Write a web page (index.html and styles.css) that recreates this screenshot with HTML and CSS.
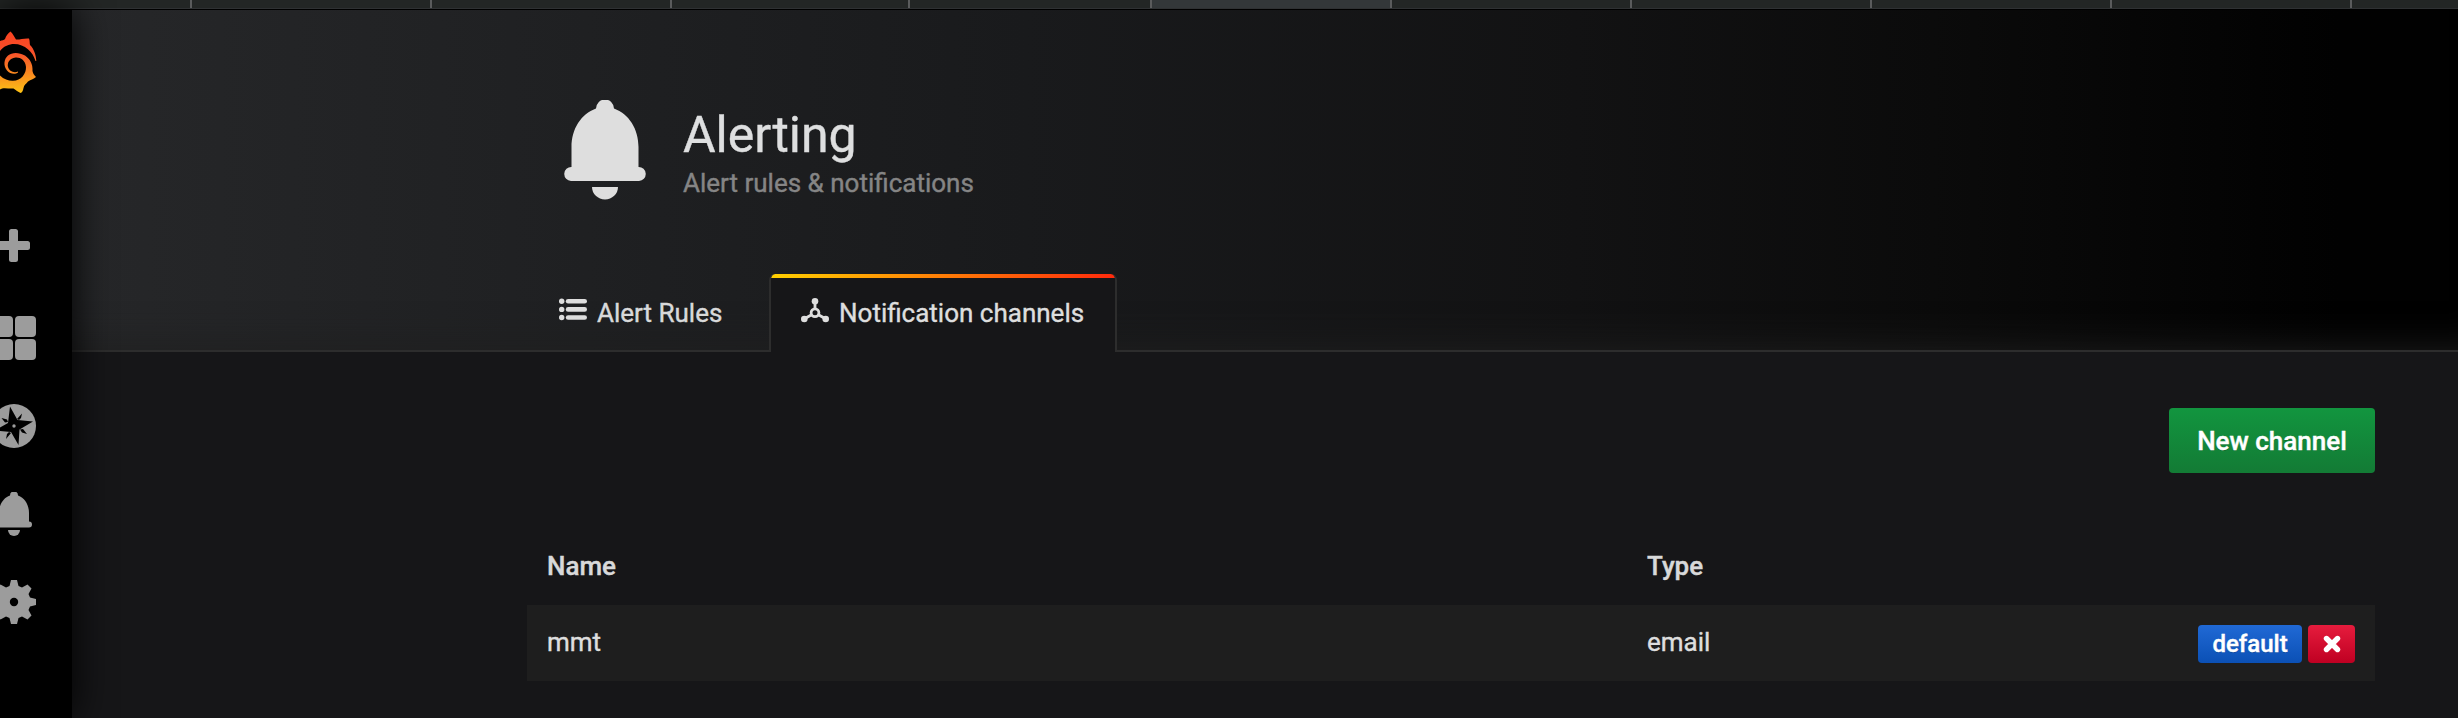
FILE: index.html
```
<!DOCTYPE html>
<html lang="en">
<head>
<meta charset="utf-8">
<title>Alerting - Notification channels</title>
<link rel="stylesheet" href="styles.css">
</head>
<body>
<div class="screen">
  <div class="browser-tabs">
    <span class="browser-tab first"></span><span class="browser-tab"></span><span class="browser-tab"></span><span class="browser-tab narrow"></span><span class="browser-tab wide"></span><span class="browser-tab active"></span><span class="browser-tab"></span><span class="browser-tab"></span><span class="browser-tab"></span><span class="browser-tab"></span><span class="browser-tab"></span>
  </div>
  <div class="app">
    <nav class="sidemenu">
      <a class="logo"><svg width="37" height="64" viewBox="0 0 37 64">
        <defs><linearGradient id="flame" x1="0" y1="72" x2="0" y2="0" gradientUnits="userSpaceOnUse"><stop offset="0" stop-color="#fff100"/><stop offset="0.18" stop-color="#fcb817"/><stop offset="0.7" stop-color="#f8502a"/><stop offset="1" stop-color="#f94220"/></linearGradient></defs>
        <path fill="url(#flame)" d="M0 10C2 9.500 4 9 5 8C6 5 8 2 10.500 .5C13 3 14 5 16 8.500C19 9 24 7 29 7.500C30 10 29.500 12 30 14C34 18 36 24 36.300 30L35.500 30C33 21 25 13 14 13C9 13 4 15 0 20Z"/>
        <path fill="url(#flame)" d="M18 41.500C15 43.800 10 43 7 39.500C3 34.500 4 28 8 24.500C12 21 19 21 25 24.500C30 28 33 33 32.500 40C33 43 34.500 44 36 46C33 48.500 31 48.500 28 50.500C26 53 24 54 23.500 57C23 60 22 61.500 20.500 62C18 61 16 59 13.500 57.500C9 58 3 56 0 58.500V44.500C4 48.500 9 50 13 49.800C21 49.500 26.300 43 26 36C25.500 29 20 26 15.500 26.500C9.500 27 7 32 8 36C9 40 14 42.500 18 40.500Z"/>
      </svg></a>
      <a class="menu-item plus"><svg width="30" height="33" viewBox="0 0 30 33"><path d="M-3 12H9V2.500Q9 0 11.500 0H15.500Q18 0 18 2.500V12H27.500Q30 12 30 14.500V18.500Q30 21 27.500 21H18V30.500Q18 33 15.500 33H11.500Q9 33 9 30.500V21H-3Z"/></svg></a>
      <a class="menu-item grid"><svg width="36" height="44" viewBox="0 0 36 44"><rect x="-8" width="21" height="21" rx="4"/><rect x="15" width="21" height="21" rx="4"/><rect x="-8" y="23" width="21" height="21" rx="4"/><rect x="15" y="23" width="21" height="21" rx="4"/></svg></a>
      <a class="menu-item"><svg width="36" height="44" viewBox="0 0 36 44"><circle cx="14" cy="22" r="22"/><path class="cut" d="M10 2.500L17.500 16L33 17.500L19.500 25.500L18.500 41L11 28L-5 26.500L8 19ZM22 9.500L21 14L19 16L17 15ZM1.500 14L7 15.500L8 18L5 18.500ZM6 35L7 30L9 28L11 29ZM27 30L22 28.500L20 25.500L23 25Z"/><circle cx="14" cy="22" r="1.700"/></svg></a>
      <a class="menu-item"><svg width="32" height="44" viewBox="14 0 32 44"><use href="#bell"/></svg></a>
      <a class="menu-item"><svg width="36" height="44" viewBox="0 0 36 44"><path d="M11 0H17L18.500 6L22 7.500L27.500 4.500L31.500 8.500L28.500 14L30 17.500L36 19V25L30 26.500L28.500 30L31.500 35.500L27.500 39.500L22 36.500L18.500 38L17 44H11L9.500 38L6 36.500L.5 39.500L-4 35V9L.5 4.500L6 7.500L9.500 6Z"/><circle class="cut" cx="14" cy="22" r="4.200"/></svg></a>
    </nav>
    <main class="content">
      <header class="page-header">
        <div class="container">
          <div class="title-row">
            <svg class="title-icon" width="82" height="100" viewBox="0 0 82 100"><path d="M32 8.500A9 9 0 0 1 50 8.500C65 14 74.500 29 74.500 47V67A7 7 0 0 1 75 81H7A7 7 0 0 1 7.500 67V47C7.500 29 17 14 32 8.500Z"/><path d="M28 87H54A13 12.500 0 0 1 28 87Z"/></svg>
            <div><h1>Alerting</h1><div class="subtitle">Alert rules &amp; notifications</div></div>
          </div>
          <div class="tabs">
            <a class="tab"><svg class="tab-icon" width="28" height="23" viewBox="0 0 28 23"><circle cx="2.700" cy="3.300" r="2.700"/><circle cx="2.700" cy="11.400" r="2.700"/><circle cx="2.700" cy="19.500" r="2.700"/><rect x="6.800" y="1" width="21.200" height="4.600" rx="2.300"/><rect x="6.800" y="9.100" width="21.200" height="4.600" rx="2.300"/><rect x="6.800" y="17.200" width="21.200" height="4.600" rx="2.300"/></svg><span>Alert Rules</span></a>
            <a class="tab active"><svg class="tab-icon" width="28" height="25" viewBox="0 0 28 25"><path class="wire" d="M14 5V11M11 16.500L4 20.500M17 16.500L24 20.500"/><circle class="ring" cx="14" cy="14.700" r="3.900"/><circle cx="14" cy="3.300" r="3.300"/><circle cx="3.300" cy="21" r="3.300"/><circle cx="24.700" cy="21" r="3.300"/></svg><span>Notification channels</span></a>
          </div>
        </div>
      </header>
      <section class="container body">
        <div class="actions"><a class="btn-new">New channel</a></div>
        <table class="channels">
          <thead><tr><th class="name">Name</th><th class="type">Type</th><th></th></tr></thead>
          <tbody><tr><td><div class="cell">mmt</div></td><td><div class="cell">email</div></td><td><div class="row-actions"><a class="btn-small blue">default</a><a class="btn-small red"><svg width="18" height="18" viewBox="0 0 18 18"><path d="M3.500 3.500L14.500 14.500M14.500 3.500L3.500 14.500"/></svg></a></div></td></tr></tbody>
        </table>
      </section>
    </main>
  </div>
</div>
<svg class="defs" width="0" height="0"><defs><g id="bell"><path d="M24 3.500A4 4 0 0 1 32 3.500C39 6 43 13 43 21V29.500A3 3 0 0 1 43 35.500H13A3 3 0 0 1 13 29.500V21C13 13 17 6 24 3.500Z"/><path d="M22 38H34A6 6 0 0 1 22 38Z"/></g></defs></svg>
</body>
</html>
```
FILE: styles.css
```
* { box-sizing: border-box; }
body { margin: 0; background: #161719; color: #d8d9da; font: 26px/39px Roboto, sans-serif; -webkit-text-stroke: 0.4px currentColor; }
.screen { width: 2458px; height: 718px; display: flex; flex-direction: column; overflow: hidden; background: #161618; }
.defs { position: absolute; }
.browser-tabs { display: flex; height: 10px; flex: none; background: #232625; border-bottom: 1px solid #000; box-shadow: inset 0 -1px #2f3133; }
.browser-tab { width: 240px; height: 8px; flex: none; border-right: 2px solid #5a5b5c; }
.browser-tab.first { width: 192px; }
.browser-tab.narrow { width: 238px; }
.browser-tab.wide { width: 242px; }
.browser-tab.active { background: #333739; }
.app { display: flex; flex: 1; min-height: 0; }
.sidemenu { position: relative; z-index: 1; width: 72px; flex: none; background: #000; box-shadow: 0 0 40px #000; display: flex; flex-direction: column; fill: #9c9c9c; }
.sidemenu svg { display: block; }
.logo { padding-top: 21px; height: 219px; }
.menu-item { height: 88px; }
.menu-item.plus { height: 87px; }
.cut { fill: #000; }
.content { flex: 1; min-width: 0; }
.page-header { height: 342px; border-bottom: 2px solid #2d2d2d; background: linear-gradient(90deg, #262729, #191a1c 40%, #121213 63%, #0b0b0b 78%, #010101 95%); box-shadow: inset 0 -40px 40px -40px #1f1f1f; }
.container { width: 1848px; margin-left: 455px; }
.title-row { display: flex; height: 264px; padding: 90px 0 0 37px; }
.title-icon { flex: none; margin-right: 37px; fill: #dedede; }
h1 { margin: 7px 0 0; font-size: 50px; line-height: 56px; font-weight: 400; color: #dedfe0; }
.subtitle { padding-top: 1px; font-size: 26px; line-height: 39px; color: #858585; }
.tabs { display: flex; height: 78px; }
.tab { display: flex; align-items: flex-start; padding: 20px 30px 0 32px; color: #d8d9da; fill: #dedede; width: 242px; white-space: nowrap; }
.tab span { margin-left: 10px; }
.tab.active { width: 348px; height: 78px; border: 2px solid #2d2d2d; border-bottom: 0; border-top: 0; border-radius: 6px 6px 0 0; padding: 20px 30px 0; color: #dedede; background: linear-gradient(90deg, #ffd000, #ff2a0c) top / 100% 4px no-repeat, #161618; }
.tab-icon { margin-top: 4px; flex: none; }
.wire, .ring { fill: none; stroke: #dedede; stroke-width: 2.800; }
.body { margin-left: 455px; padding-top: 56px; }
.actions { display: flex; justify-content: flex-end; height: 120px; }
.btn-new { width: 206px; height: 65px; border-radius: 4px; background: linear-gradient(#12953f, #137b35); color: #fff; font-weight: 500; line-height: 66px; text-align: center; text-shadow: 0 1px 0 rgba(0,0,0,.2); }
.channels { width: 1848px; border-spacing: 0; table-layout: fixed; }
th { height: 77px; padding: 0 20px; font-weight: 500; text-align: left; color: #d8d9da; }
td { height: 76px; padding: 0 20px; background: #1e1e1e; color: #dedede; }
th.name { width: 1100px; }
th.type { width: 460px; }
.cell { padding-bottom: 2px; }
.row-actions { display: flex; gap: 6px; justify-content: flex-end; padding-top: 2px; }
.btn-small { display: flex; align-items: center; justify-content: center; height: 38px; border-radius: 4px; color: #fff; font-size: 24px; font-weight: 500; text-shadow: 0 1px 0 rgba(0,0,0,.2); }
.blue { width: 104px; background: linear-gradient(#2069d5, #0b50b5); }
.red { width: 47px; background: linear-gradient(#e61c3d, #bf0022); }
.red svg { fill: none; stroke: #fff; stroke-width: 5.400; stroke-linecap: round; }
```
